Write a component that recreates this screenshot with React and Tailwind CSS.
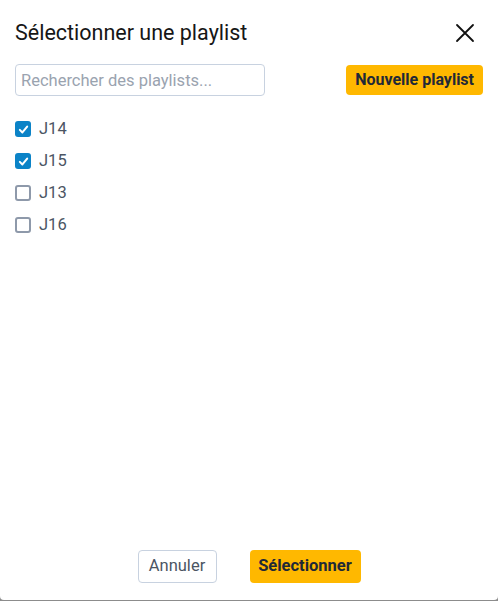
import React, { useState } from "react";

const playlists = [
  { id: "j14", name: "J14", checked: true },
  { id: "j15", name: "J15", checked: true },
  { id: "j13", name: "J13", checked: false },
  { id: "j16", name: "J16", checked: false },
];

const Checkbox = ({ checked }) =>
  checked ? (
    <span className="flex h-4 w-4 items-center justify-center rounded-[3px] bg-[#0b83c7]">
      <svg width="11" height="11" viewBox="0 0 12 12" fill="none">
        <path d="M2 6.4 L4.8 9.2 L10 2.8" stroke="white" strokeWidth="2.2" strokeLinecap="round" strokeLinejoin="round" />
      </svg>
    </span>
  ) : (
    <span className="h-4 w-4 rounded-[3px] border-2 border-[#8e99aa] bg-white" />
  );

const App = () => {
  const [items] = useState(playlists);

  return (
    <div className="h-[601px] w-full bg-[#8c8c8c]" style={{ fontFamily: "Roboto, 'Liberation Sans', sans-serif" }}>
      <div className="flex h-[600px] w-full flex-col rounded-b-[4px] bg-white px-[15px]">
        <div className="flex items-center justify-between pt-[18px]">
          <h1 className="text-[21.5px] leading-[30px] text-[#161616]">Sélectionner une playlist</h1>
          <button className="mr-[6px] flex h-6 w-6 items-center justify-center">
            <svg width="20" height="20" viewBox="0 0 20 20" fill="none">
              <path d="M2 2 L18 18 M18 2 L2 18" stroke="#111" strokeWidth="1.8" strokeLinecap="round" />
            </svg>
          </button>
        </div>

        <div className="mt-[16px] flex items-center justify-between">
          <input
            className="h-[32px] w-[250px] rounded-[4px] border border-[#c8d2e0] px-[5px] text-[16.5px] text-[#374151] outline-none placeholder:text-[#9aa3af]"
            placeholder="Rechercher des playlists..."
          />
          <button className="h-[30px] rounded-[4px] bg-[#ffb800] px-[9px] text-[16px] font-bold text-[#1f2937]">
            Nouvelle playlist
          </button>
        </div>

        <ul className="mt-[17px] flex flex-col">
          {items.map((p) => (
            <li key={p.id} className="flex h-[32px] items-center gap-[8px]">
              <Checkbox checked={p.checked} />
              <span className="text-[16.5px] text-[#4b5563]">{p.name}</span>
            </li>
          ))}
        </ul>

        <div className="mt-auto flex justify-center gap-[33px] pb-[17px]">
          <button className="h-[33px] w-[79px] rounded-[4px] border border-[#c8d2e0] bg-white text-[16.5px] text-[#4b5563]">
            Annuler
          </button>
          <button className="h-[33px] w-[111px] rounded-[4px] bg-[#ffb800] text-[16.5px] font-bold text-[#1f2937]">
            Sélectionner
          </button>
        </div>
      </div>
    </div>
  );
};

export default App;
